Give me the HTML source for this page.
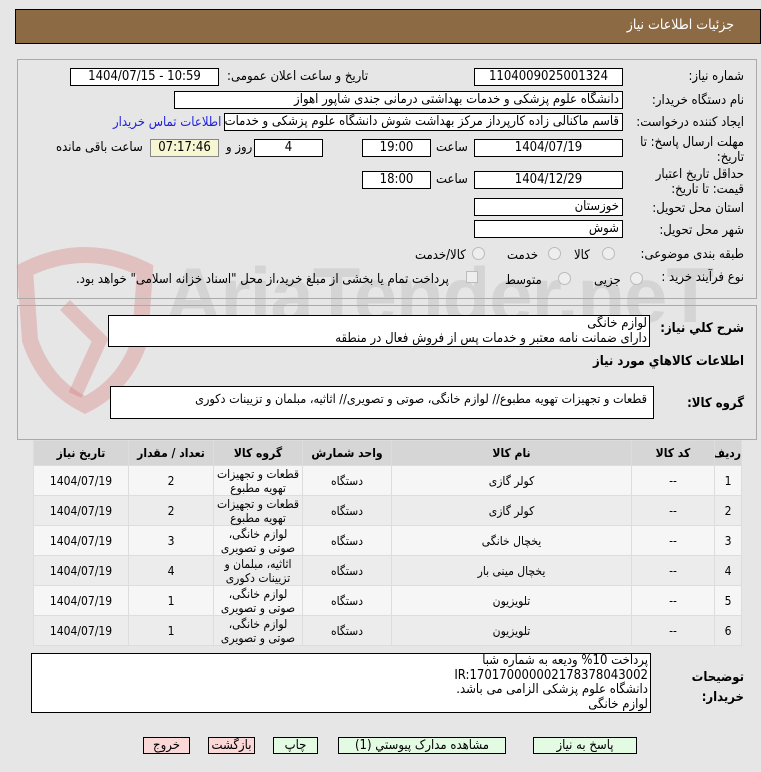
<!DOCTYPE html>
<html><head><meta charset="utf-8">
<style>
*{box-sizing:border-box;margin:0;padding:0}
html,body{width:761px;height:772px;overflow:hidden}
body{background:#e6e6e6;font-family:"DejaVu Sans Condensed","DejaVu Sans",sans-serif;font-size:12px;color:#000;position:relative}
.a{position:absolute;white-space:nowrap}
.box{position:absolute;background:#fff;border:1px solid #000;height:18px;line-height:16px;font-size:13px;overflow:hidden;white-space:nowrap}
.c{text-align:center}
.r{text-align:right;padding-right:3px;direction:rtl}
.lbl{position:absolute;font-size:13px;white-space:nowrap;direction:rtl}
.rad{position:absolute;width:13px;height:13px;border-radius:50%;border:1px solid #bbb;background:#eee}
table{position:absolute;left:33px;top:440px;width:709px;border-collapse:collapse;font-size:12px;table-layout:fixed}
td,th{border:1px solid #ddd;text-align:center;line-height:14px;overflow:hidden;white-space:nowrap}
th{background:#d6d6d6;height:25px;font-weight:bold}
tr.o td{background:#f6f6f6}
tr.e td{background:#ececec}
td{height:30px}
.btn{position:absolute;top:737px;height:17px;border:1px solid #000;font-size:13px;line-height:15px;text-align:center;background:#e3fbe3}
.red{background:#fbd8d8}
</style></head><body>
<div class="a" style="left:15px;top:9px;width:746px;height:35px;background:#8c6a43;border:1px solid #000"></div>
<div class="a" style="right:27px;top:17px;color:#fff;font-size:14px;direction:rtl">جزئیات اطلاعات نیاز</div>

<svg class="a" style="left:15px;top:245px" width="140" height="190" viewBox="0 0 140 190"><path d="M10 25 Q70 -5 130 25 L125 95 Q110 140 70 160 Q30 140 15 95 Z" fill="none" stroke="rgba(215,120,120,0.35)" stroke-width="16"/><path d="M50 60 L85 95 L60 150" fill="none" stroke="rgba(215,120,120,0.35)" stroke-width="14"/></svg>
<div class="a" style="left:165px;top:250px;font-size:78px;font-weight:bold;color:rgba(150,150,150,0.22);font-family:'Liberation Sans',sans-serif;letter-spacing:-1px">AriaTender.neT</div>

<div class="a" style="left:17px;top:59px;width:740px;height:240px;border:1px solid #aaa"></div>
<div class="a" style="left:17px;top:305px;width:740px;height:135px;border:1px solid #aaa"></div>

<div class="lbl" style="right:17px;top:69px">شماره نیاز:</div>
<div class="box c" style="left:474px;top:68px;width:149px">1104009025001324</div>
<div class="lbl" style="left:227px;top:69px">تاریخ و ساعت اعلان عمومی:</div>
<div class="box c" style="left:70px;top:68px;width:149px">1404/07/15 - 10:59</div>

<div class="lbl" style="right:17px;top:93px">نام دستگاه خریدار:</div>
<div class="box r" style="left:174px;top:91px;width:449px">دانشگاه علوم پزشکی و خدمات بهداشتی درمانی جندی شاپور اهواز</div>

<div class="lbl" style="right:17px;top:115px">ایجاد کننده درخواست:</div>
<div class="box r" style="left:224px;top:113px;width:399px">قاسم ماکنالی زاده کارپرداز مرکز بهداشت شوش دانشگاه علوم پزشکی و خدمات</div>
<div class="lbl" style="left:113px;top:115px;color:#2222dd">اطلاعات تماس خریدار</div>

<div class="lbl" style="right:17px;top:135px;line-height:15px;text-align:right">مهلت ارسال پاسخ: تا<br>تاریخ:</div>
<div class="box c" style="left:474px;top:139px;width:149px">1404/07/19</div>
<div class="lbl" style="left:436px;top:140px">ساعت</div>
<div class="box c" style="left:362px;top:139px;width:69px">19:00</div>
<div class="box c" style="left:254px;top:139px;width:69px">4</div>
<div class="lbl" style="left:226px;top:140px">روز و</div>
<div class="box c" style="left:150px;top:139px;width:69px;background:#f6f6d2;border-color:#888">07:17:46</div>
<div class="lbl" style="left:56px;top:140px">ساعت باقی مانده</div>

<div class="lbl" style="right:17px;top:167px;line-height:15px;text-align:right">حداقل تاریخ اعتبار<br>قیمت: تا تاریخ:</div>
<div class="box c" style="left:474px;top:171px;width:149px">1404/12/29</div>
<div class="lbl" style="left:436px;top:172px">ساعت</div>
<div class="box c" style="left:362px;top:171px;width:69px">18:00</div>

<div class="lbl" style="right:17px;top:201px">استان محل تحویل:</div>
<div class="box r" style="left:474px;top:198px;width:149px">خوزستان</div>
<div class="lbl" style="right:17px;top:223px">شهر محل تحویل:</div>
<div class="box r" style="left:474px;top:220px;width:149px">شوش</div>

<div class="lbl" style="right:17px;top:247px">طبقه بندی موضوعی:</div>
<div class="rad" style="left:602px;top:247px"></div><div class="lbl" style="left:574px;top:248px">کالا</div>
<div class="rad" style="left:548px;top:247px"></div><div class="lbl" style="left:507px;top:248px">خدمت</div>
<div class="rad" style="left:472px;top:247px"></div><div class="lbl" style="left:415px;top:248px">کالا/خدمت</div>

<div class="lbl" style="right:17px;top:270px">نوع فرآیند خرید :</div>
<div class="rad" style="left:630px;top:272px"></div><div class="lbl" style="left:594px;top:273px">جزیی</div>
<div class="rad" style="left:558px;top:272px"></div><div class="lbl" style="left:505px;top:273px">متوسط</div>
<div class="a" style="left:466px;top:271px;width:12px;height:12px;border:1px solid #bbb;background:#eee"></div>
<div class="lbl" style="left:76px;top:272px">پرداخت تمام یا بخشی از مبلغ خرید،از محل "اسناد خزانه اسلامی" خواهد بود.</div>

<div class="lbl" style="right:17px;top:321px;font-weight:bold">شرح کلي نیاز:</div>
<div class="a" style="left:108px;top:315px;width:542px;height:32px;background:#fff;border:1px solid #000;font-size:13px;line-height:15px;direction:rtl;text-align:right;padding-right:2px">لوازم خانگی<br>دارای ضمانت نامه معتبر و خدمات پس از فروش فعال در منطقه</div>
<div class="lbl" style="right:17px;top:354px;font-weight:bold">اطلاعات کالاهاي مورد نیاز</div>
<div class="lbl" style="right:17px;top:396px;font-weight:bold">گروه کالا:</div>
<div class="a" style="left:110px;top:386px;width:544px;height:33px;background:#fff;border:1px solid #000;font-size:12.5px;direction:rtl;text-align:right;padding:4px 6px 0 0">قطعات و تجهیزات تهویه مطبوع// لوازم خانگی، صوتی و تصویری// اثاثیه، مبلمان و تزیینات دکوری</div>

<table dir="rtl">
<colgroup><col style="width:27px"><col style="width:83px"><col style="width:240px"><col style="width:89px"><col style="width:89px"><col style="width:85px"><col></colgroup>
<tr><th>ردیف</th><th>کد کالا</th><th>نام کالا</th><th>واحد شمارش</th><th>گروه کالا</th><th>تعداد / مقدار</th><th>تاریخ نیاز</th></tr>
<tr class="o"><td>1</td><td>--</td><td>کولر گازی</td><td>دستگاه</td><td>قطعات و تجهیزات<br>تهویه مطبوع</td><td>2</td><td>1404/07/19</td></tr>
<tr class="e"><td>2</td><td>--</td><td>کولر گازی</td><td>دستگاه</td><td>قطعات و تجهیزات<br>تهویه مطبوع</td><td>2</td><td>1404/07/19</td></tr>
<tr class="o"><td>3</td><td>--</td><td>یخچال خانگی</td><td>دستگاه</td><td>لوازم خانگی،<br>صوتی و تصویری</td><td>3</td><td>1404/07/19</td></tr>
<tr class="e"><td>4</td><td>--</td><td>یخچال مینی بار</td><td>دستگاه</td><td>اثاثیه، مبلمان و<br>تزیینات دکوری</td><td>4</td><td>1404/07/19</td></tr>
<tr class="o"><td>5</td><td>--</td><td>تلویزیون</td><td>دستگاه</td><td>لوازم خانگی،<br>صوتی و تصویری</td><td>1</td><td>1404/07/19</td></tr>
<tr class="e"><td>6</td><td>--</td><td>تلویزیون</td><td>دستگاه</td><td>لوازم خانگی،<br>صوتی و تصویری</td><td>1</td><td>1404/07/19</td></tr>
</table>

<div class="lbl" style="right:17px;top:668px;font-weight:bold;line-height:20px;text-align:right">توضیحات<br>خریدار:</div>
<div class="a" style="left:31px;top:653px;width:620px;height:60px;background:#fff;border:1px solid #000;font-size:13px;line-height:14.5px;direction:rtl;text-align:right;padding-right:2px">پرداخت 10% ودیعه به شماره شبا<br>IR:170170000002178378043002 <br>دانشگاه علوم پزشکی الزامی می باشد.<br>لوازم خانگی</div>

<div class="btn" style="left:533px;width:104px">پاسخ به نیاز</div>
<div class="btn" style="left:338px;width:168px">مشاهده مدارک پیوستي (1)</div>
<div class="btn" style="left:273px;width:45px">چاپ</div>
<div class="btn red" style="left:208px;width:47px">بازگشت</div>
<div class="btn red" style="left:143px;width:47px">خروج</div>
</body></html>
